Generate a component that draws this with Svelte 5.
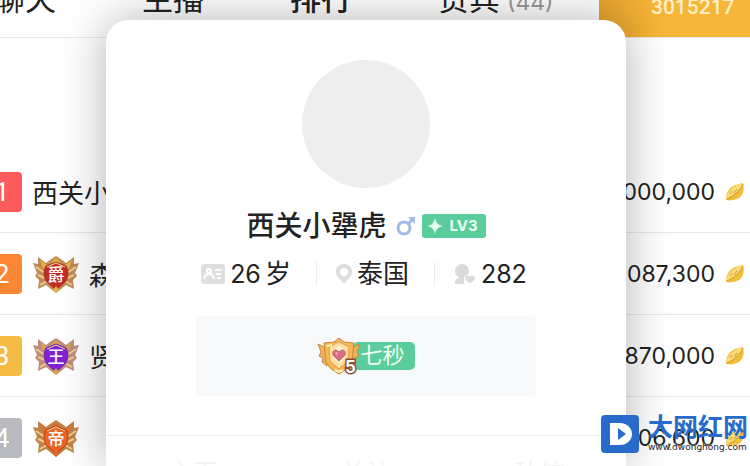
<script>
  const tabs = [
    { label: '聊天' },
    { label: '主播' },
    { label: '排行', active: true },
    { label: '贵宾', count: 44 },
  ];

  const rows = [
    { rank: 1, name: '西关小犟虎', score: '1,000,000', color: '#fc5b5c' },
    { rank: 2, name: '森', score: '1,087,300', color: '#fb8735', medal: { text: '爵', wing: '#c08a58', tip: '#e7b33c', core: '#c32c22', edge: '#9b3a28' } },
    { rank: 3, name: '贤', score: '870,000', color: '#f5bc45', medal: { text: '王', wing: '#bd8b80', tip: '#d9a54e', core: '#8420d4', edge: '#6a2f9d' } },
    { rank: 4, name: '', score: '806,600', color: '#b9babf', medal: { text: '帝', wing: '#be8446', tip: '#df6a33', core: '#ea6323', edge: '#b84116' } },
  ];

  const actions = ['主页', '关注', '私信'];
</script>

<div class="page">
  <header class="top">
    <nav class="tabs">
      {#each tabs as tab}
        <button class="tab" class:active={tab.active}>
          {tab.label}{#if tab.count}<span class="count">({tab.count})</span>{/if}
        </button>
      {/each}
    </nav>
    <div class="room">3015217</div>
  </header>

  <ol class="list">
    {#each rows as row}
      <li class="row">
        <span class="rank" style="background: {row.color}">{row.rank}</span>
        {#if row.medal}
          <svg class="medal" viewBox="0 0 46 38">
            <path d="M5 2 L13 8 L17 5 L23 1 L29 5 L33 8 L41 2 L41 9 L46 8 L42 18 L44 21 L40 25 L41 34 L33 30 L23 38 L13 30 L5 34 L6 25 L2 21 L4 18 L0 8 L5 9 Z" fill={row.medal.wing} />
            <path d="M7 5 L15 11 L23 3 L31 11 L39 5 L36 13 L30 14 L23 8 L16 14 L10 13 Z" fill={row.medal.tip} />
            <path d="M3 12 L12 18 M5 20 L12 23 M7 30 L14 26 M43 12 L34 18 M41 20 L34 23 M39 30 L32 26" stroke="#f0c98c" stroke-width="2" />
            <path d="M23 7 L33 11 Q37 18 33 26 L23 35 L13 26 Q9 18 13 11 Z" fill={row.medal.core} stroke={row.medal.edge} />
            <path d="M14 12 L23 8 L32 12" fill="none" stroke="#ffd8a0" />
            <path d="M20 35 L23 31 L26 35 L23 38 Z" fill={row.medal.tip} />
            <text x="23" y="26" text-anchor="middle">{row.medal.text}</text>
          </svg>
        {/if}
        <span class="nick">{row.name}</span>
        <span class="score">{row.score}</span>
        <svg class="leaf" viewBox="0 0 20 20">
          <path d="M1 18 C1 8 6 3 18 1 C20 8 18 17 8 18 C5 19 3 18 1 18 Z" fill="#f3bd3c" />
          <path d="M1 17 C3 8 8 4 18 1 C16 8 10 13 1 17 Z" fill="#fbdc77" />
          <path d="M2 17 C9 14 15 9 18 2 M5 12 L7 9 M9 11 L12 7" fill="none" stroke="#c99a31" />
        </svg>
      </li>
    {/each}
  </ol>

  <section class="card">
    <div class="avatar"></div>
    <h1 class="name">
      <span>西关小犟虎</span>
      <svg class="male" viewBox="0 0 20 20" fill="none" stroke="#a3b9e6" stroke-width="3">
        <circle cx="8" cy="12" r="6" />
        <path d="M12 8 L17 3" />
        <path d="M12 1 H19 V8 Z" fill="#a3b9e6" stroke="none" />
      </svg>
      <span class="level">
        <svg viewBox="0 0 16 18"><path d="M8 1 Q9 8 16 9 Q9 10 8 17 Q7 10 0 9 Q7 8 8 1 Z" fill="#e9fff2" /></svg>
        LV3
      </span>
    </h1>

    <ul class="meta">
      <li>
        <svg class="id" viewBox="0 0 24 20">
          <rect width="24" height="20" rx="3" fill="#dfdfe0" />
          <g fill="none" stroke="#fff" stroke-width="2">
            <circle cx="8" cy="7" r="2" />
            <path d="M3 15 Q4 10 8 10 Q12 10 13 15 M14 6 H20 M15 10 H20 M16 14 H20" />
          </g>
        </svg>
        <span class="age">26<span>岁</span></span>
      </li>
      <li>
        <svg class="pin" viewBox="0 0 16 20">
          <path d="M8 0 C3 0 0 3 0 8 C0 13 5 16 8 20 C11 16 16 13 16 8 C16 3 13 0 8 0 Z" fill="#dcdddf" />
          <circle cx="8" cy="8" r="4" fill="#fff" />
        </svg>
        <span class="place">泰国</span>
      </li>
      <li>
        <svg class="fans" viewBox="0 0 22 20">
          <circle cx="8" cy="7" r="7" fill="#d9dadc" />
          <path d="M5 12 H10 V20 H2 Q0 20 1 17 Q2 15 5 14 Z" fill="#d9dadc" />
          <path d="M16 20 L11 16 Q10 11 14 11 L16 12 L18 11 Q22 11 21 16 Z" fill="#d9dadc" stroke="#fff" />
        </svg>
        <span>282</span>
      </li>
    </ul>

    <div class="club">
      <svg class="shield" viewBox="0 0 44 38">
        <path d="M1 7 L9 11 L10 29 L5 25 L6 21 L2 19 L4 15 Z M43 7 L35 11 L34 29 L39 25 L38 21 L42 19 L40 15 Z" fill="#f0b35a" stroke="#c98440" />
        <path d="M22 1 L27 5 L37 6 L35 25 L31 31 L22 37 L13 31 L9 25 L7 6 L17 5 Z" fill="#f4b855" stroke="#c98440" />
        <path d="M22 5 L32 10 L31 24 L22 32 L13 24 L12 10 Z" fill="#ffdda0" stroke="#e0a04c" />
        <path d="M22 9 L28 13 L28 21 L22 27 L16 21 L16 13 Z" fill="#fff0cf" />
        <path d="M22 24 L16 18 Q15 13 19 13 L22 15 L25 13 Q29 13 28 18 Z" fill="#e06a88" stroke="#b06a5a" />
        <path d="M18 16 Q19 14 21 16 L20 19 Z" fill="#f7a2b3" />
        <path d="M10 9 L15 8 M18 33 L22 35 L26 33" fill="none" stroke="#fff3c4" stroke-width="2" />
        <text x="28" y="36">5</text>
      </svg>
      <span class="tag">七秒</span>
    </div>

    <div class="actions">
      {#each actions as action}
        <button>{action}</button>
      {/each}
    </div>
  </section>

  <a class="mark" href="http://www.dwonghong.com">
    <svg viewBox="0 0 38 38">
      <rect width="38" height="38" rx="4" fill="#286bcb" />
      <path fill-rule="evenodd" d="M9 8 H19 C26 8 31 13 31 19 C31 25 26 30 19 30 H9 Z M17 13 V25 L25 19 Z" fill="#fff" />
    </svg>
    <span class="site">
      <strong>大网红网</strong>
      <small>www.dwonghong.com</small>
    </span>
  </a>
</div>

<style>
  :global(body) { margin: 0; background: #fff; }
  .page { position: relative; height: 100vh; overflow: hidden; font-family: Roboto, "Noto Sans CJK SC", sans-serif; color: #222; }
  button { padding: 0; border: 0; background: none; color: inherit; font: inherit; white-space: nowrap; }

  .top { display: flex; height: 37px; border-bottom: 1px solid #e8e8e8; }
  .tabs { flex: 1; display: flex; align-items: flex-end; gap: 86px; margin-left: -6px; padding-bottom: 20px; overflow: hidden; }
  .tab { display: flex; align-items: flex-end; font-size: 31px; line-height: 34px; }
  .tab.active { font-weight: 500; }
  .count { margin-left: 7px; font: 23px/30px Inter, sans-serif; color: #999; }
  .room { flex: 0 0 151px; height: 37px; box-sizing: border-box; padding-left: 52px; background: linear-gradient(90deg, #e9a42f, #f6b638 40%); color: #fff0c8; font-size: 21px; font-weight: 500; line-height: 15px; }

  .list { margin: 113px 0 0; padding: 0; list-style: none; }
  .row { display: flex; align-items: center; height: 81px; padding-right: 5px; border-bottom: 1px solid #e8e8e8; }
  .rank { width: 40px; height: 40px; margin-left: -18px; border-radius: 4px; color: #fff; font-size: 26px; line-height: 40px; text-align: center; }
  .medal { width: 46px; height: 38px; margin-left: 11px; }
  .medal text { fill: #fff; font-size: 17px; font-weight: 500; }
  .nick { flex: 1; margin-left: 10px; font-size: 26px; white-space: nowrap; }
  .score { font: 23px/40px Inter, sans-serif; }
  .leaf { width: 20px; height: 20px; margin-left: 10px; }

  .card { position: absolute; top: 20px; right: 124px; bottom: 0; left: 106px; display: flex; flex-direction: column; align-items: center; background: #fff; border-radius: 22px 22px 0 0; box-shadow: 0 0 48px rgba(0, 0, 0, .3); overflow: hidden; }
  .avatar { flex: none; width: 128px; height: 128px; margin-top: 40px; border-radius: 50%; background: #eee; }
  .name { display: flex; align-items: center; margin: 17px 0 0; font-size: 28px; font-weight: 500; line-height: 40px; }
  .name > span:first-child { padding-top: 2px; }
  .male { width: 20px; height: 20px; margin: 0 6px 0 9px; }
  .level { display: flex; align-items: center; gap: 7px; width: 64px; height: 24px; box-sizing: border-box; padding-left: 5px; border-radius: 3px; background: #5bcc9b; color: #e9fff2; font: 700 15px/24px Inter, sans-serif; }
  .level svg { flex: none; width: 16px; height: 18px; }

  .meta { display: flex; align-items: center; margin: 7px 0 0; padding: 0 4px 0 0; list-style: none; font: 25px/40px Inter, "Noto Sans CJK SC", sans-serif; }
  .meta li { display: flex; align-items: center; gap: 5px; }
  .meta li + li::before { content: ''; width: 1px; height: 24px; margin: 0 14px 0 25px; background: #ececec; }
  .meta svg { height: 20px; }
  .age { display: flex; gap: 4px; }
  .age span, .place { font-size: 26px; }
  .id { width: 24px; }
  .pin { width: 16px; }
  .fans { width: 22px; }

  .club { display: flex; align-items: center; justify-content: center; flex: none; width: 340px; height: 80px; margin-top: 22px; border-radius: 4px; background: #f8f9fb; }
  .shield { z-index: 1; width: 44px; height: 38px; }
  .shield text { fill: #fff; stroke: #8c492f; stroke-width: 3px; paint-order: stroke; font: 700 17px Inter, sans-serif; }
  .tag { height: 28px; margin-left: -8px; padding: 0 10px 0 7px; border-radius: 5px; background: #5bcc9b; color: #f1fff6; font-size: 22px; line-height: 28px; }

  .actions { display: grid; grid-template-columns: repeat(3, 1fr); align-self: stretch; margin-top: 39px; padding-top: 22px; border-top: 1px solid #f0f0f0; color: #f4f4f4; font-size: 26px; line-height: 32px; }

  .mark { position: absolute; right: 2px; bottom: 13px; display: flex; align-items: center; gap: 9px; color: #286bcb; text-decoration: none; }
  .mark svg { width: 38px; height: 38px; }
  .site { display: flex; flex-direction: column; width: 100px; }
  .site strong { font-size: 25px; font-weight: 700; line-height: 26px; }
  .site small { color: #222; font: 9px/12px "DejaVu Sans", sans-serif; text-shadow: 0 0 2px #fff, 0 0 2px #fff; }
</style>
